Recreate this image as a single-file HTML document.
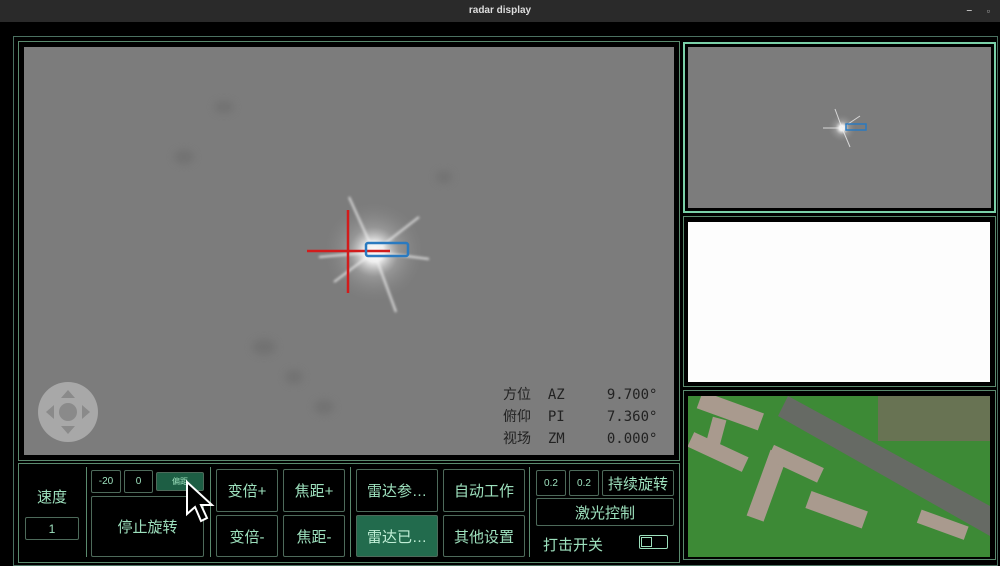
<!DOCTYPE html>
<html><head><meta charset="utf-8"><style>
*{margin:0;padding:0;box-sizing:border-box}
body{width:1000px;height:557px;background:#000;position:relative;overflow:hidden;font-family:"Liberation Sans","Noto Sans CJK SC",sans-serif}
.a{position:absolute}
.title{left:0;top:0;width:1000px;height:22px;background:#2a2a2a;color:#ddd;font-size:10px;text-align:center;line-height:22px;font-weight:bold}
.fr{position:absolute;border:1px solid #5a8a6e}
.btn{position:absolute;border:1px solid #4d6a5a;border-radius:2px;color:#9de0bd;font-size:15px;display:flex;align-items:center;justify-content:center;background:#000}
.sm{font-size:10px}
.img{background:#7c7c7c}
</style></head><body>
<div class="a title">radar display<span style="position:absolute;right:28px;top:0;color:#bbb">–</span><span style="position:absolute;right:10px;top:0;color:#bbb;font-size:9px">▫</span></div>
<div class="fr" style="left:13px;top:36px;width:985px;height:530px;border-color:#4a7060"></div>
<div class="fr" style="left:18px;top:41px;width:662px;height:420px"></div>
<div class="a img" style="left:24px;top:47px;width:650px;height:408px;overflow:hidden">
<svg width="650" height="408" style="position:absolute;left:0;top:0">
<defs><radialGradient id="g"><stop offset="0" stop-color="#fff"/><stop offset=".2" stop-color="#f4f4f4" stop-opacity=".95"/><stop offset=".5" stop-color="#bbb" stop-opacity=".4"/><stop offset="1" stop-color="#888" stop-opacity="0"/></radialGradient>
<filter id="b"><feGaussianBlur stdDeviation="1.2"/></filter><filter id="b2"><feGaussianBlur stdDeviation="4"/></filter></defs>
<g fill="#6c6c6c" opacity=".6" filter="url(#b2)"><ellipse cx="160" cy="110" rx="10" ry="7"/><ellipse cx="240" cy="300" rx="12" ry="8"/><ellipse cx="270" cy="330" rx="9" ry="7"/><ellipse cx="300" cy="360" rx="10" ry="7"/><ellipse cx="420" cy="130" rx="8" ry="6"/><ellipse cx="200" cy="60" rx="10" ry="6"/></g>
<circle cx="350" cy="205" r="50" fill="url(#g)"/>
<g stroke="#f4f4f4" stroke-width="2" opacity=".8" filter="url(#b)"><line x1="350" y1="205" x2="325" y2="150"/><line x1="350" y1="205" x2="372" y2="265"/><line x1="350" y1="205" x2="395" y2="170"/><line x1="350" y1="205" x2="295" y2="210"/><line x1="350" y1="205" x2="405" y2="212"/><line x1="350" y1="205" x2="310" y2="235"/></g>
<line x1="324" y1="163" x2="324" y2="246" stroke="#d21c1c" stroke-width="2.5"/>
<line x1="283" y1="204" x2="366" y2="204" stroke="#d21c1c" stroke-width="2.5"/>
<rect x="342" y="196" width="42" height="13" rx="2" fill="none" stroke="#2a7ac0" stroke-width="2.5"/>
<circle cx="44" cy="365" r="30" fill="#a8a8a8"/><circle cx="44" cy="365" r="9" fill="#8a8a8a"/>
<g fill="#8a8a8a"><polygon points="44,343 37,351 51,351"/><polygon points="44,387 37,379 51,379"/><polygon points="22,365 30,358 30,372"/><polygon points="66,365 58,358 58,372"/></g>
</svg>
<div class="a" style="left:479px;top:337px;font-family:'DejaVu Sans Mono','Noto Sans CJK SC',monospace;font-size:14px;color:#222;line-height:22px;white-space:pre">方位  AZ     9.700°
俯仰  PI     7.360°
视场  ZM     0.000°</div>
</div>
<div class="fr" style="left:683px;top:42px;width:313px;height:171px;border:2px solid #7ad0a8"></div>
<div class="a img" style="left:688px;top:47px;width:303px;height:161px;overflow:hidden">
<svg width="303" height="161"><circle cx="154" cy="81" r="14" fill="url(#g)"/><g stroke="#eee" stroke-width="1" opacity=".8"><line x1="154" y1="81" x2="147" y2="62"/><line x1="154" y1="81" x2="162" y2="100"/><line x1="154" y1="81" x2="135" y2="81"/><line x1="154" y1="81" x2="172" y2="69"/></g><rect x="158" y="77" width="20" height="6" fill="none" stroke="#2a7ac0" stroke-width="1.5"/></svg></div>
<div class="fr" style="left:683px;top:216px;width:313px;height:171px"></div>
<div class="a" style="left:688px;top:222px;width:302px;height:160px;background:#fdfdfd"></div>
<div class="fr" style="left:683px;top:390px;width:313px;height:170px"></div>
<div class="a" style="left:688px;top:396px;width:302px;height:161px;background:#3d8a36;overflow:hidden">
<svg width="302" height="161"><path d="M100 0 L302 110 L302 140 L90 20Z" fill="#666a64"/><rect x="190" y="0" width="112" height="45" fill="#7a6a60" opacity=".7"/><g fill="#a99a8e"><rect x="10" y="5" width="65" height="18" transform="rotate(20 40 14)"/><rect x="20" y="22" width="14" height="38" transform="rotate(15 27 40)"/><rect x="0" y="48" width="60" height="16" transform="rotate(25 30 56)"/><rect x="70" y="55" width="18" height="70" transform="rotate(20 80 90)"/><rect x="80" y="60" width="55" height="16" transform="rotate(25 108 68)"/><rect x="120" y="105" width="60" height="18" transform="rotate(20 150 110)"/><rect x="230" y="120" width="50" height="14" transform="rotate(20 250 127)"/></g></svg></div>
<div class="fr" style="left:18px;top:463px;width:662px;height:100px"></div>
<div class="fr" style="left:86px;top:467px;width:1px;height:90px;border-width:0 0 0 1px"></div>
<div class="fr" style="left:210px;top:467px;width:1px;height:90px;border-width:0 0 0 1px"></div>
<div class="fr" style="left:350px;top:467px;width:1px;height:90px;border-width:0 0 0 1px"></div>
<div class="fr" style="left:529px;top:467px;width:1px;height:90px;border-width:0 0 0 1px"></div>
<div class="a" style="left:22px;top:486px;width:60px;text-align:center;color:#9de0bd;font-size:15px">速度</div>
<div class="btn" style="left:25px;top:517px;width:54px;height:23px;font-size:12px">1</div>
<div class="btn sm" style="left:91px;top:470px;width:30px;height:23px">-20</div>
<div class="btn sm" style="left:124px;top:470px;width:29px;height:23px">0</div>
<div class="btn" style="left:156px;top:472px;width:48px;height:19px;background:#1d5e44;font-size:8px">偏距</div>
<div class="btn" style="left:91px;top:496px;width:113px;height:61px">停止旋转</div>
<div class="btn" style="left:216px;top:469px;width:62px;height:43px">变倍+</div>
<div class="btn" style="left:283px;top:469px;width:62px;height:43px">焦距+</div>
<div class="btn" style="left:216px;top:515px;width:62px;height:42px">变倍-</div>
<div class="btn" style="left:283px;top:515px;width:62px;height:42px">焦距-</div>
<div class="btn" style="left:356px;top:469px;width:82px;height:43px">雷达参…</div>
<div class="btn" style="left:443px;top:469px;width:82px;height:43px">自动工作</div>
<div class="btn" style="left:356px;top:515px;width:82px;height:42px;background:#226b4d;color:#c0eed6">雷达已…</div>
<div class="btn" style="left:443px;top:515px;width:82px;height:42px">其他设置</div>
<div class="btn sm" style="left:536px;top:470px;width:30px;height:26px">0.2</div>
<div class="btn sm" style="left:569px;top:470px;width:30px;height:26px">0.2</div>
<div class="btn" style="left:602px;top:470px;width:72px;height:26px">持续旋转</div>
<div class="btn" style="left:536px;top:498px;width:138px;height:28px">激光控制</div>
<div class="a" style="left:543px;top:534px;color:#9de0bd;font-size:15px">打击开关</div>
<div class="a" style="left:639px;top:535px;width:29px;height:14px;border:1px solid #9de0bd;border-radius:2px"><div style="position:absolute;left:1px;top:1px;width:11px;height:10px;border:1px solid #9de0bd"></div></div>
<svg class="a" style="left:184px;top:480px" width="32" height="46"><path d="M3 2 L3 34 L11 27 L17 41 L23 38 L17 25 L28 25 Z" fill="#000" stroke="#fff" stroke-width="2"/></svg>
</body></html>
